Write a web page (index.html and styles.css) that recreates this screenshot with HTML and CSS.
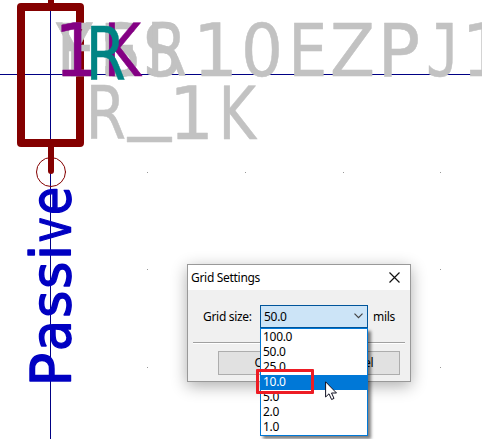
FILE: index.html
```html
<!DOCTYPE html>
<html lang="en">
<head>
<meta charset="utf-8">
<title>Grid Settings</title>
<link rel="stylesheet" href="styles.css">
</head>
<body>
<main class="editor">
<svg class="schematic" width="482" height="439" viewBox="0 0 482 439">
  <g fill="#999">
    <rect x="147" y="172" width="1" height="1"/><rect x="245" y="172" width="1" height="1"/><rect x="343" y="172" width="1" height="1"/><rect x="440" y="172" width="1" height="1"/>
    <rect x="147" y="269" width="1" height="1"/><rect x="440" y="269" width="1" height="1"/><rect x="147" y="367" width="1" height="1"/><rect x="440" y="367" width="1" height="1"/>
  </g>
  <path class="axis" d="M0 74.5H482M50.500 0V439"/>
  <g class="part">
    <path stroke-width="6" d="M51 -5V4M51 145V171"/>
    <rect x="21" y="7" width="59" height="136" stroke-width="8"/>
    <circle cx="51" cy="172" r="14.500" stroke-width="1"/>
  </g>
  <g class="label grey">
    <text y="75.500"><tspan x="56" textLength="36.500" lengthAdjust="spacingAndGlyphs">Y</tspan><tspan x="100" textLength="38" lengthAdjust="spacingAndGlyphs">E</tspan><tspan x="143" textLength="38" lengthAdjust="spacingAndGlyphs">S</tspan></text>
    <text y="75.500"><tspan x="57" textLength="38" lengthAdjust="spacingAndGlyphs">E</tspan><tspan x="101.500" textLength="38.500" lengthAdjust="spacingAndGlyphs">S</tspan><tspan x="146.500" textLength="40.600" lengthAdjust="spacingAndGlyphs">R</tspan><tspan x="193" textLength="45" lengthAdjust="spacingAndGlyphs">1</tspan><tspan x="241" textLength="42" lengthAdjust="spacingAndGlyphs">0</tspan><tspan x="288.300" textLength="39" lengthAdjust="spacingAndGlyphs">E</tspan><tspan x="330" textLength="45" lengthAdjust="spacingAndGlyphs">Z</tspan><tspan x="377.500" textLength="42.600" lengthAdjust="spacingAndGlyphs">P</tspan><tspan class="mono" x="426" textLength="34" lengthAdjust="spacingAndGlyphs">J</tspan><tspan x="461.500" textLength="45" lengthAdjust="spacingAndGlyphs">1</tspan></text>
    <text y="138.500"><tspan x="85.500" textLength="40.600" lengthAdjust="spacingAndGlyphs">R</tspan><tspan x="128" dy="-14" textLength="43" lengthAdjust="spacingAndGlyphs">_</tspan><tspan x="169" dy="14" textLength="45" lengthAdjust="spacingAndGlyphs">1</tspan><tspan x="218.400" textLength="37.500" lengthAdjust="spacingAndGlyphs">K</tspan></text>
  </g>
  <text class="label purple" y="75.500"><tspan x="54" textLength="45" lengthAdjust="spacingAndGlyphs">1</tspan><tspan x="103.400" textLength="37.500" lengthAdjust="spacingAndGlyphs">K</tspan></text>
  <text class="label teal" y="79.500"><tspan x="85.500" textLength="40.600" lengthAdjust="spacingAndGlyphs">R</tspan></text>
  <text class="pin-type" transform="translate(69.500 381.500) rotate(-90)" y="0"><tspan x="-5" textLength="33.600" lengthAdjust="spacingAndGlyphs">P</tspan><tspan x="30.500" textLength="31" lengthAdjust="spacingAndGlyphs">a</tspan><tspan x="63.700" textLength="27" lengthAdjust="spacingAndGlyphs">s</tspan><tspan x="92.700" textLength="27" lengthAdjust="spacingAndGlyphs">s</tspan><tspan x="121.300" textLength="15.400" lengthAdjust="spacingAndGlyphs">i</tspan><tspan x="139.200" textLength="25" lengthAdjust="spacingAndGlyphs">v</tspan><tspan x="166.400" textLength="28" lengthAdjust="spacingAndGlyphs">e</tspan></text>
</svg>
<section class="dialog">
  <header class="titlebar"><span class="title">Grid Settings</span>
    <svg class="close" width="11" height="11" viewBox="0 0 11 11"><path d="M.5.500l10 10M10.500.500l-10 10" stroke="#111" stroke-width="1.200"/></svg>
  </header>
  <div class="field">
    <label class="name">Grid size:</label>
    <div class="combo"><span>50.0</span><svg width="9" height="6" viewBox="0 0 9 6"><path d="M.5.700l4 4 4-4" fill="none" stroke="#444" stroke-width="1.200"/></svg>
      <ul class="options"><li>100.0</li><li>50.0</li><li>25.0</li><li class="selected">10.0</li><li>5.0</li><li>2.0</li><li>1.0</li></ul>
    </div>
    <span class="unit">mils</span>
  </div>
  <hr class="rule">
  <div class="actions"><div class="button">OK</div><div class="button">Cancel</div></div>
</section>
<div class="highlight"></div>
<svg class="cursor" width="13" height="20" viewBox="0 0 13 20"><path d="M.6.800V16L4 12.800 6.600 18.500 9 17.400 6.500 12H11.500Z" fill="#fff" stroke="#112" stroke-width="1"/></svg>
</main>
</body>
</html>
```
FILE: styles.css
```css
* { box-sizing: border-box; }
body { margin: 0; background: #fff; overflow: hidden; }
.editor { position: relative; width: 482px; height: 439px; overflow: hidden; font: 12px/15px "Noto Sans", sans-serif; letter-spacing: -0.3px; color: #000; }
.schematic { display: block; }
.axis { stroke: #000084; stroke-width: 1; fill: none; }
.part { stroke: #840000; fill: none; stroke-linecap: round; stroke-linejoin: round; }
.label { font: 73px "DejaVu Sans", sans-serif; letter-spacing: 0; stroke-width: 0.5; stroke-linejoin: round; }
.mono { font-family: "DejaVu Sans Mono", monospace; }
.grey { fill: #c2c2c2; stroke: #c2c2c2; }
.purple { fill: #840084; stroke: #840084; }
.teal { fill: #008484; stroke: #008484; }
.pin-type { font: 55px "DejaVu Sans", sans-serif; letter-spacing: 0; fill: #0000c2; stroke: #0000c2; stroke-width: 1.5; stroke-linejoin: round; }
.dialog { position: absolute; left: 187px; top: 264px; width: 224px; height: 118px; background: #f0f0f0; border: 1px solid #999; box-shadow: 0 4px 15px rgba(0,0,0,.32); }
.titlebar { display: flex; align-items: center; justify-content: space-between; height: 25px; padding: 0 10px 0 3px; background: #fff; }
.title { margin-top: -1px; }
.field { display: flex; align-items: center; height: 24px; margin-top: 14px; padding-left: 15px; }
.name { width: 57px; }
.combo { position: relative; display: flex; align-items: center; justify-content: space-between; width: 108px; height: 23px; padding: 0 4px 0 3px; border: 1px solid #00559b; background: #cce4f7; }
.unit { margin-left: 5px; }
.options { position: absolute; z-index: 1; left: -1px; top: 22px; width: 108px; height: 108px; margin: 0; padding: 1px 0 0; list-style: none; background: #fff; border: 1px solid #0078d7; box-shadow: 3px 3px 3px rgba(0,0,0,.5); }
.options li { height: 15px; padding-left: 2px; line-height: 14px; }
.options .selected { background: #0078d7; color: #fff; }
.rule { height: 2px; margin: 14px 5px 0; border: 0; border-top: 1px solid #a0a0a0; background: #fff; }
.actions { display: flex; gap: 4px; margin: 7px 0 0 30px; }
.button { width: 89px; height: 24px; border: 1px solid #adadad; background: #e1e1e1; text-align: center; line-height: 22px; }
.highlight { position: absolute; z-index: 2; left: 256px; top: 369px; width: 58px; height: 25px; border: 3px solid #ed1c24; border-radius: 1px; }
.cursor { position: absolute; z-index: 2; left: 325px; top: 381px; }
```
